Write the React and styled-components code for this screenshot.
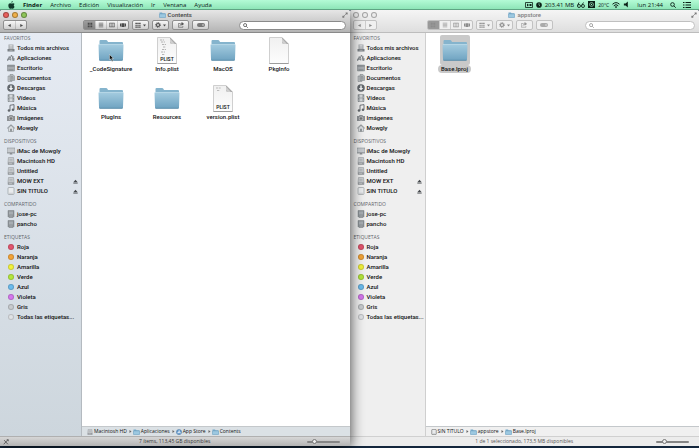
import { useState } from "react";
import styled, { createGlobalStyle, css } from "styled-components";

const GlobalStyle = createGlobalStyle`
  * {
    box-sizing: border-box;
  }
  body {
    margin: 0;
    background: #13263c;
    font-family: Roboto, "Noto Sans", sans-serif;
    font-size: 6px;
    font-weight: 500;
    color: #111;
  }
  button, input {
    font: inherit;
    color: inherit;
    margin: 0;
    padding: 0;
    border: none;
    background: none;
  }
  a {
    color: inherit;
    text-decoration: none;
  }
  svg {
    display: block;
    flex: none;
  }
`;

const Desktop = styled.div`
  display: flex;
  flex-direction: column;
  min-height: 100vh;
  padding-bottom: 2px;
`;

/* ---------- menu bar ---------- */

const MenuBar = styled.header`
  display: flex;
  align-items: center;
  justify-content: space-between;
  height: 10px;
  padding: 0 8px;
  background: linear-gradient(#b4fbd6, #8ee6b8);
  border-bottom: 1px solid #5fa583;
  color: #0c2017;
  font-family: "Open Sans", "Noto Sans", sans-serif;
  position: relative;
  z-index: 2;
`;

const Menus = styled.nav`
  display: flex;
  align-items: center;
  gap: 8px;
`;

const MenuButton = styled.button`
  line-height: 10px;
  font-weight: ${({ $app }) => ($app ? 700 : 500)};
`;

const StatusItems = styled.div`
  display: flex;
  align-items: center;
  gap: 3px;
  line-height: 10px;
`;

const Temperature = styled.span`
  font-size: 5px;
`;

const Clock = styled.span`
  padding: 0 4px;
`;

const NotificationButton = styled.button`
  padding-left: 4px;
`;

/* ---------- window ---------- */

const Windows = styled.main`
  flex: 1;
  display: grid;
  grid-template-columns: 1fr 1fr;
`;

const WindowFrame = styled.section`
  display: flex;
  flex-direction: column;
  border-radius: 2px 2px 0 0;
  overflow: hidden;
  background: #fff;
  ${({ $active }) =>
    $active &&
    css`
      position: relative;
      z-index: 1;
      box-shadow: 0 2px 14px rgba(0, 0, 0, 0.75);
    `}
`;

const Chrome = styled.header`
  height: 23px;
  background: ${({ $active }) =>
    $active
      ? "linear-gradient(#e6e6e6, #b4b4b4)"
      : "linear-gradient(#f5f5f5, #dedede)"};
  border-bottom: 1px solid ${({ $active }) => ($active ? "#8a8a8a" : "#bdbdbd")};
`;

const TitleRow = styled.div`
  display: grid;
  grid-template-columns: 1fr auto 1fr;
  align-items: center;
  height: 9px;
  padding: 0 2px 0 3px;
  color: ${({ $active }) => ($active ? "#444" : "#808080")};
`;

const Lights = styled.div`
  display: flex;
  gap: 3px;
`;

const Light = styled.button`
  width: 6px;
  height: 6px;
  border-radius: 50%;
  border: 1px solid rgba(0, 0, 0, 0.3);
  background: ${({ $color }) => $color};
`;

const Title = styled.h1`
  display: flex;
  align-items: center;
  gap: 2px;
  margin: 0;
  font-size: 6px;
  font-weight: 500;
  line-height: 9px;
`;

const FullScreenButton = styled.button`
  justify-self: end;
  color: #777;
`;

const ToolRow = styled.div`
  display: flex;
  align-items: center;
  height: 12px;
  padding-right: 4px;
  color: ${({ $active }) => ($active ? "#4a4a4a" : "#8c8c8c")};
`;

const NavSlot = styled.div`
  width: ${({ $sidebar }) => $sidebar}px;
  padding: 0 3px;
`;

const Tools = styled.div`
  flex: 1;
  display: flex;
  align-items: center;
  gap: 3px;
  padding-left: 1px;
`;

const Group = styled.div`
  display: inline-flex;
  height: 10px;
  border: 1px solid ${({ $active }) => ($active ? "#8f8f8f" : "#c2c2c2")};
  border-radius: 2px;
  overflow: hidden;
  background: ${({ $active }) =>
    $active ? "linear-gradient(#f7f7f7, #cfcfcf)" : "#f0f0f0"};
`;

const ToolButton = styled.button`
  display: flex;
  align-items: center;
  justify-content: center;
  gap: 2px;
  width: ${({ $wide }) => ($wide ? 15 : 11)}px;
  background: ${({ $pressed }) => ($pressed ? "rgba(0, 0, 0, 0.36)" : "none")};

  & + & {
    border-left: 1px solid rgba(0, 0, 0, 0.15);
  }
`;

const SearchBox = styled.label`
  display: flex;
  align-items: center;
  gap: 2px;
  width: ${({ $width }) => $width}px;
  height: 9px;
  padding: 0 3px;
  border: 1px solid ${({ $active }) => ($active ? "#8a8a8a" : "#c0c0c0")};
  border-radius: 5px;
  background: #fff;
`;

const SearchInput = styled.input`
  flex: 1;
  min-width: 0;
  height: 7px;
  outline: none;
`;

/* ---------- window body ---------- */

const Body = styled.div`
  flex: 1;
  display: flex;
`;

const Sidebar = styled.aside`
  flex: none;
  width: ${({ $width }) => $width}px;
  display: flex;
  flex-direction: column;
  gap: 4px;
  padding-top: 1px;
  border-right: 1px solid ${({ $active }) => ($active ? "#b4bac0" : "#cfcfcf")};
  background: ${({ $active }) =>
    $active ? "linear-gradient(#e6ebf3, #cdd6dd)" : "#efefef"};
`;

const SectionTitle = styled.h2`
  margin: 0;
  padding-left: 4px;
  font-family: "Open Sans", "Noto Sans", sans-serif;
  font-size: 5px;
  line-height: 9px;
  font-weight: 500;
  color: #5f656b;
`;

const List = styled.ul`
  list-style: none;
  margin: 0;
  padding: 0;
`;

const Item = styled.li`
  display: flex;
  align-items: center;
  justify-content: space-between;
  height: 10px;
  padding: 0 3px 0 7px;
`;

const ItemLink = styled.a`
  display: flex;
  align-items: center;
  gap: 2px;
  line-height: 10px;
  white-space: nowrap;
`;

const IconSlot = styled.span`
  display: flex;
  justify-content: center;
  width: 8px;
  color: #7b8085;
`;

const Tag = styled.span`
  width: 6px;
  height: 6px;
  border-radius: 50%;
  border: 1px solid rgba(0, 0, 0, 0.16);
  background: ${({ $color }) => $color};
`;

const Content = styled.div`
  flex: 1;
  display: flex;
  flex-direction: column;
  min-width: 0;
`;

const Files = styled.div`
  flex: 1;
  display: grid;
  grid-template-columns: repeat(auto-fill, 56px);
  grid-auto-rows: 48px;
  padding: 2px 1px;
`;

const FileButton = styled.button`
  display: flex;
  flex-direction: column;
  align-items: center;
`;

const FileIcon = styled.span`
  display: flex;
  align-items: center;
  justify-content: center;
  width: 30px;
  height: 30px;
  border-radius: 2px;
  background: ${({ $selected }) => ($selected ? "#c9c9c9" : "none")};
`;

const FileName = styled.span`
  padding: 0 3px;
  border-radius: 4px;
  line-height: 8px;
  background: ${({ $selected }) => ($selected ? "#c9c9c9" : "none")};
`;

const PathBar = styled.nav`
  display: flex;
  align-items: center;
  gap: 2px;
  height: 10px;
  padding: 0 5px;
  border-top: 1px solid #c4c8cb;
  background: ${({ $active }) => ($active ? "#dbe1e5" : "#f0f0f0")};
  font-family: "Open Sans", "Noto Sans", sans-serif;
  font-size: 5px;
`;

const Crumb = styled.a`
  display: flex;
  align-items: center;
  gap: 1px;
  line-height: 9px;
`;

const StatusBar = styled.footer`
  display: grid;
  grid-template-columns: 1fr auto 1fr;
  align-items: center;
  height: 10px;
  padding: 0 3px;
  border-top: 1px solid ${({ $active }) => ($active ? "#b0b0b0" : "#d0d0d0")};
  background: ${({ $active }) =>
    $active ? "linear-gradient(#d6d6d6, #b4b4b4)" : "#ececec"};
  font-family: "Open Sans", "Noto Sans", sans-serif;
  font-size: 5px;
  font-weight: 400;
  line-height: 9px;
  color: ${({ $active }) => ($active ? "#333" : "#555")};
`;

const ZoomSlider = styled.input`
  appearance: none;
  grid-column: 3;
  justify-self: end;
  width: 33px;
  height: 6px;
  margin-right: 7px;

  &::-webkit-slider-runnable-track {
    height: 2px;
    background: #858585;
    border-radius: 1px;
  }
  &::-webkit-slider-thumb {
    appearance: none;
    width: 5px;
    height: 5px;
    margin-top: -2px;
    border: 1px solid #777;
    border-radius: 50%;
    background: #eee;
  }
`;

const StatusText = styled.span`
  grid-column: 2;
`;

/* ---------- icons ---------- */

const Apple = () => (
  <svg width="7" height="8" viewBox="0 0 14 16" fill="#10382a">
    <path d="M9.6 0c.1 1.6-1.200 3.300-2.900 3.400C6.500 1.800 8 .2 9.600 0zM12.800 12c-.8 1.800-1.800 3.500-3.200 3.500-1 0-1.300-.6-2.500-.6s-1.600.6-2.500.6C2.600 15.500.7 11.800.7 8.900c0-2.900 1.800-4.500 3.600-4.500 1.200 0 2 .7 2.900.7.900 0 1.700-.8 3.200-.8 1 0 2.100.5 2.800 1.500-2.500 1.400-2.100 5 .6 6.200z" />
  </svg>
);

const SmallFolder = () => (
  <svg width="7" height="6" viewBox="0 0 14 12">
    <path d="M1 2.500V1h5l1 1.500h6V11H1z" fill="#75a9c9" />
    <path d="M1 4h12v7H1z" fill="#9cc8e0" stroke="#6a9dbd" strokeWidth=".8" />
  </svg>
);

const Folder = () => (
  <svg width="26" height="24" viewBox="0 0 26 24">
    <defs>
      <linearGradient id="folder" x1="0" y1="0" x2="0" y2="1">
        <stop offset="0" stopColor="#a3cbdf" />
        <stop offset="1" stopColor="#6fa3c1" />
      </linearGradient>
    </defs>
    <path
      d="M1.500 22V3q0-1 1-1H8q1 0 1.500 1l.5 1h14q1 0 1 1v17z"
      fill="#85b4cd"
    />
    <path d="M.5 6.500h25L25 21.500q0 1-1 1H2q-1 0-1-1z" fill="url(#folder)" />
    <path d="M1 6.500h24" stroke="#c3e0ed" strokeWidth=".7" />
    <path d="M1.500 22.300h23" stroke="#5688a5" strokeWidth=".8" />
  </svg>
);

const DocText = styled.text`
  font-size: 5px;
  font-weight: 600;
`;

const Doc = ({ plist, lines }) => (
  <svg width="20" height="27" viewBox="0 0 20 27">
    <defs>
      <linearGradient id="paper" x1="0" y1="0" x2="0" y2="1">
        <stop offset="0" stopColor="#f0f0f0" />
        <stop offset="1" stopColor="#fdfdfd" />
      </linearGradient>
    </defs>
    <path
      d="M.5.500H13L19.500 7v19.500H.5z"
      fill="url(#paper)"
      stroke="#c4c4c4"
      strokeWidth=".8"
    />
    <path d="M13 .5 19.500 7H15q-2 0-2-2z" fill="#a2a2a2" />
    <path d="M13 1.500 18 7h-3.500L13 5z" fill="#cfcfcf" />
    {lines && (
      <path
        d="M3 3h4M4 5h4M5 7.500h4M6 10h3M5 12.500h4M4 15h4M5 17.500h3"
        stroke="#b4b4b4"
        strokeWidth="1.200"
        strokeDasharray="2 .7"
      />
    )}
    {plist && !lines && (
      <path d="M3 3h5M4 5.500h3" stroke="#bcbcbc" strokeDasharray="2 .7" />
    )}
    {plist && (
      <DocText x="10" y="24" textAnchor="middle" fill="#222">
        PLIST
      </DocText>
    )}
    <path d="M.5 26.500h19" stroke="#8e8e8e" strokeWidth=".8" />
  </svg>
);

const Magnifier = ({ size = 6 }) => (
  <svg
    width={size}
    height={size}
    viewBox="0 0 12 12"
    fill="none"
    stroke="currentColor"
    strokeWidth="1.800"
  >
    <circle cx="5" cy="5" r="3.700" />
    <path d="m7.800 7.800 3.700 3.700" />
  </svg>
);

// every glyph lives on a 16x16 grid
const glyphs = {
  files: (
    <>
      <path d="M3 1h10v9H3z" fill="#a4a8ac" />
      <path d="M5 3h6M5 5.500h6M5 8h6" stroke="#fff" />
      <path d="M1 10h14v5H1z" fill="currentColor" />
      <path d="M5 12.500h6" stroke="#ddd" />
    </>
  ),
  apps: (
    <g fill="none" stroke="currentColor" strokeWidth="1.800">
      <path d="M1 14 4.500 5l3 8M6 9 9 2l5 12M0 10.500h7M9 10h7M12 4v10" />
    </g>
  ),
  desktop: (
    <>
      <path d="M1 2h14v12H1z" fill="#a9adb1" stroke="currentColor" />
      <path d="M1 4h14M3 12h10" stroke="currentColor" strokeWidth="2" />
    </>
  ),
  documents: (
    <>
      <path d="M2 4h8v11H2z" fill="#c3c6c9" stroke="currentColor" />
      <path d="M6 1h6l3 3v9H6z" fill="#b1b5b8" stroke="currentColor" />
      <path d="M8 5h4M8 7.500h5M8 10h5" stroke="currentColor" />
    </>
  ),
  downloads: (
    <>
      <circle cx="8" cy="8" r="7.500" fill="#62676c" />
      <path d="M8 13 3.500 8h3V3h3v5h3z" fill="#f2f4f6" />
    </>
  ),
  movies: (
    <>
      <path d="M2 1h12v14H2z" fill="#d4d7da" stroke="currentColor" />
      <path d="M4.500 1v14M11.500 1v14M4.500 8h7" stroke="currentColor" />
      <path
        d="M3 2v13M13 2v13"
        stroke="currentColor"
        strokeWidth="2"
        strokeDasharray="1.500 1.500"
      />
    </>
  ),
  music: (
    <>
      <path
        d="M6 13V2.500l8-1.300V11"
        fill="none"
        stroke="#62676c"
        strokeWidth="1.800"
      />
      <circle cx="4" cy="13" r="2.600" fill="#62676c" />
      <circle cx="12" cy="11.500" r="2.600" fill="#62676c" />
    </>
  ),
  pictures: (
    <>
      <path d="M0 4h4l1-2h6l1 2h4v10H0z" fill="#8d9195" />
      <circle cx="8" cy="9" r="3.500" fill="#777" stroke="#eee" />
    </>
  ),
  home: (
    <>
      <path d="M3 8v7h10V8L8 3z" fill="#dcdfe2" stroke="currentColor" />
      <path
        d="M.5 8.500 8 1.500l7.500 7"
        fill="none"
        stroke="currentColor"
        strokeWidth="1.800"
      />
      <path d="M6.500 9.500h3V15h-3z" fill="currentColor" />
    </>
  ),
  imac: (
    <>
      <path d="M0 2h16v10H0z" fill="#c6cace" stroke="currentColor" />
      <path d="M0 10.500h16v2H0z" fill="#9a9ea2" />
      <path d="M6 12h4l1 3H5z" fill="#8a8e92" />
    </>
  ),
  disk: (
    <>
      <path d="M3 1h10l1 9v5H2v-5z" fill="#c8cbce" stroke="#8d9195" />
      <path d="M2 10.500h12V15H2z" fill="#989ca0" />
      <path d="M4 12.800h6" stroke="#ddd" />
      <path d="M5 5h6M5 7.500h6" stroke="#a2a6aa" />
    </>
  ),
  external: (
    <>
      <rect
        x="2"
        y="1"
        width="12"
        height="14"
        rx="2"
        fill="#e9ebed"
        stroke="currentColor"
      />
      <path d="M4 12.500h8" stroke="#a9adb1" />
    </>
  ),
  pc: (
    <>
      <path d="M2 1h12v12l-2 2H4l-2-2z" fill="#8b9095" stroke="#7b8085" />
      <path d="M4 3h8v6H4z" fill="#a7adb2" />
      <path d="M5 12h6" stroke="#c4c8cc" />
    </>
  ),
  store: (
    <>
      <circle cx="8" cy="8" r="7" fill="#5f97cb" stroke="#456f9a" />
      <path
        d="m5 12 3.500-8 3 8M4 9.500h8"
        fill="none"
        stroke="#fff"
        strokeWidth="1.500"
      />
    </>
  ),
  eject: <path d="M8 2 15 10H1zM1 12h14v2.500H1z" fill="#44484c" />,
  grid: (
    <path d="M2 2h5v5H2zM9 2h5v5H9zM2 9h5v5H2zM9 9h5v5H9z" fill="currentColor" />
  ),
  list: (
    <path
      d="M2 3h12M2 6.300h12M2 9.600h12M2 13h12"
      stroke="currentColor"
      strokeWidth="1.500"
    />
  ),
  columns: (
    <path
      d="M1 3h14v10H1zM5.700 3v10M10.300 3v10"
      fill="none"
      stroke="currentColor"
      strokeWidth="1.600"
    />
  ),
  coverflow: <path d="M0 4h3v8H0zM4 3h8v10H4zM13 4h3v8h-3z" fill="currentColor" />,
  arrange: (
    <path
      d="M1 2h4v3H1zM6 2h4v3H6zM11 2h4v3h-4zM1 7h4v3H1zM6 7h4v3H6zM11 7h4v3h-4zM1 12h4v3H1zM6 12h4v3H6zM11 12h4v3h-4z"
      fill="currentColor"
    />
  ),
  gear: (
    <g fill="none" stroke="currentColor">
      <circle cx="8" cy="8" r="4" strokeWidth="3" />
      <circle cx="8" cy="8" r="6.500" strokeWidth="2.500" strokeDasharray="2.600 2.500" />
    </g>
  ),
  share: (
    <g fill="none" stroke="currentColor" strokeWidth="1.500">
      <path d="M7 4H1v10h12v-3" />
      <path d="M5 11q0-6 6-6" />
      <path d="M10 1.500 15 5l-5 3.500z" fill="currentColor" />
    </g>
  ),
  tag: (
    <>
      <rect
        x="0"
        y="4"
        width="16"
        height="8"
        rx="4"
        fill="currentColor"
        fillOpacity=".7"
      />
      <circle cx="12" cy="8" r="1.500" fill="#eee" />
    </>
  ),
  back: <path d="M12 3v10L3 8z" fill="currentColor" />,
  forward: <path d="M4 3v10l9-5z" fill="currentColor" />,
  full: (
    <path
      d="M9 1h6v6l-2-2-3 3-2-2 3-3zM7 15H1V9l2 2 3-3 2 2-3 3z"
      fill="currentColor"
    />
  ),
  tools: (
    <path d="m2 14 11-12M3 3l10 11M10 2h4v4" stroke="#444" strokeWidth="2" fill="none" />
  ),
  record: (
    <>
      <path
        d="M1 3h14v10H1z"
        fill="none"
        stroke="currentColor"
        strokeWidth="1.600"
      />
      <path d="m4 5 4 3-4 3zM9 6h4v4H9z" fill="currentColor" />
    </>
  ),
  disc: (
    <>
      <circle cx="8" cy="8" r="7.500" fill="currentColor" />
      <path d="M8 8V3M8 8l3 3" stroke="#a6f2ca" strokeWidth="1.600" />
    </>
  ),
  glasses: (
    <g fill="none" stroke="currentColor" strokeWidth="1.700">
      <circle cx="4" cy="10" r="3" />
      <circle cx="12" cy="10" r="3" />
      <path d="M1 9 4 3M9 9l4-6" />
    </g>
  ),
  chip: (
    <>
      <path d="M0 0h16v16H0z" fill="currentColor" />
      <circle cx="8" cy="8" r="4.500" fill="none" stroke="#a6f2ca" strokeWidth="1.500" />
      <circle cx="8" cy="8" r="1.500" fill="#a6f2ca" />
    </>
  ),
  wifi: (
    <g fill="none" stroke="currentColor" strokeWidth="2">
      <path d="M1 6.500q7-6.500 14 0M3.500 9.500q4.500-4.500 9 0" />
      <path d="M5.500 11.500Q8 9.500 10.500 11.500L8 14.500z" fill="currentColor" stroke="none" />
    </g>
  ),
  volume: <path d="M2 5.500h4L11 1v14L6 10.500H2z" fill="currentColor" />,
  menu: (
    <path
      d="M0 3h3M5 3h11M0 8h3M5 8h11M0 13h3M5 13h11"
      stroke="currentColor"
      strokeWidth="2.400"
    />
  ),
};

const Glyph = ({ name, size = 8 }) => (
  <svg width={size} height={size} viewBox="0 0 16 16">
    {glyphs[name]}
  </svg>
);

const Caret = () => (
  <svg width="3" height="3" viewBox="0 0 6 6" fill="currentColor">
    <path d="M0 1h6L3 5z" />
  </svg>
);

const CrumbArrow = () => (
  <svg width="3" height="3" viewBox="0 0 6 6" fill="#666">
    <path d="M1 0v6l4-3z" />
  </svg>
);

// the mouse pointer lies over the hovered folder
const HoveredIcon = styled.span`
  position: relative;
`;

const Pointer = styled.svg`
  position: absolute;
  left: 11px;
  top: 16px;
`;

/* ---------- data ---------- */

const sections = [
  {
    title: "FAVORITOS",
    items: [
      { name: "Todos mis archivos", icon: "files" },
      { name: "Aplicaciones", icon: "apps" },
      { name: "Escritorio", icon: "desktop" },
      { name: "Documentos", icon: "documents" },
      { name: "Descargas", icon: "downloads" },
      { name: "Vídeos", icon: "movies" },
      { name: "Música", icon: "music" },
      { name: "Imágenes", icon: "pictures" },
      { name: "Mowgly", icon: "home" },
    ],
  },
  {
    title: "DISPOSITIVOS",
    items: [
      { name: "iMac de Mowgly", icon: "imac" },
      { name: "Macintosh HD", icon: "disk" },
      { name: "Untitled", icon: "disk" },
      { name: "MOW EXT", icon: "disk", eject: true },
      { name: "SIN TITULO", icon: "external", eject: true },
    ],
  },
  {
    title: "COMPARTIDO",
    items: [
      { name: "jose-pc", icon: "pc" },
      { name: "pancho", icon: "pc" },
    ],
  },
  {
    title: "ETIQUETAS",
    items: [
      { name: "Roja", color: "#e4566e" },
      { name: "Naranja", color: "#f3a437" },
      { name: "Amarilla", color: "#f2f23c" },
      { name: "Verde", color: "#b4e63c" },
      { name: "Azul", color: "#6cbcee" },
      { name: "Violeta", color: "#d578ee" },
      { name: "Gris", color: "#c8cbce" },
      { name: "Todas las etiquetas...", color: "#dfe2e5" },
    ],
  },
];

const windows = [
  {
    title: "Contents",
    active: true,
    sidebar: 82,
    search: 107,
    files: [
      { name: "_CodeSignature", kind: "folder", hovered: true },
      { name: "Info.plist", kind: "plist", lines: true },
      { name: "MacOS", kind: "folder" },
      { name: "PkgInfo", kind: "doc" },
      { name: "PlugIns", kind: "folder" },
      { name: "Resources", kind: "folder" },
      { name: "version.plist", kind: "plist" },
    ],
    path: [
      { name: "Macintosh HD", icon: "disk" },
      { name: "Aplicaciones" },
      { name: "App Store", icon: "store" },
      { name: "Contents" },
    ],
    status: "7 ítems, 113,45 GB disponibles",
  },
  {
    title: "appstore",
    active: false,
    sidebar: 76,
    search: 110,
    files: [{ name: "Base.lproj", kind: "folder", selected: true }],
    path: [
      { name: "SIN TITULO", icon: "external" },
      { name: "appstore" },
      { name: "Base.lproj" },
    ],
    status: "1 de 1 seleccionado, 173,5 MB disponibles",
  },
];

const views = [
  { icon: "grid", label: "Iconos" },
  { icon: "list", label: "Lista" },
  { icon: "columns", label: "Columnas" },
  { icon: "coverflow", label: "Cover Flow" },
];

const lightColors = ["#e8605c", "#f0b04a", "#8fc65a"];

const File = ({ file }) => (
  <FileButton type="button">
    <FileIcon $selected={file.selected}>
      {file.kind === "folder" ? (
        <HoveredIcon>
          <Folder />
          {file.hovered && (
            <Pointer width="5" height="8" viewBox="0 0 10 16">
              <path
                d="M1 1v11l2.500-2.500L6 15l2-1-2.500-5H9z"
                fill="#111"
                stroke="#fff"
                strokeWidth=".8"
              />
            </Pointer>
          )}
        </HoveredIcon>
      ) : (
        <Doc plist={file.kind === "plist"} lines={file.lines} />
      )}
    </FileIcon>
    <FileName $selected={file.selected}>{file.name}</FileName>
  </FileButton>
);

const FinderWindow = ({ data }) => {
  const { title, active, sidebar, search, files, path, status } = data;
  const [query, setQuery] = useState("");
  const [view, setView] = useState("grid");
  const [zoom, setZoom] = useState(20);

  return (
    <WindowFrame $active={active}>
      <Chrome $active={active}>
        <TitleRow $active={active}>
          <Lights>
            {lightColors.map((color) => (
              <Light key={color} type="button" $color={active ? color : "#ececec"} />
            ))}
          </Lights>
          <Title>
            <SmallFolder />
            {title}
          </Title>
          <FullScreenButton type="button" aria-label="Pantalla completa">
            <Glyph name="full" size={6} />
          </FullScreenButton>
        </TitleRow>
        <ToolRow $active={active}>
          <NavSlot $sidebar={sidebar}>
            <Group $active={active}>
              <ToolButton type="button" aria-label="Atrás">
                <Glyph name="back" size={5} />
              </ToolButton>
              <ToolButton type="button" aria-label="Adelante">
                <Glyph name="forward" size={5} />
              </ToolButton>
            </Group>
          </NavSlot>
          <Tools>
            <Group $active={active}>
              {views.map(({ icon, label }) => (
                <ToolButton
                  key={icon}
                  type="button"
                  aria-label={label}
                  $pressed={view === icon}
                  onClick={() => setView(icon)}
                >
                  <Glyph name={icon} size={6} />
                </ToolButton>
              ))}
            </Group>
            <Group $active={active}>
              <ToolButton type="button" aria-label="Ordenar" $wide>
                <Glyph name="arrange" size={6} />
                <Caret />
              </ToolButton>
            </Group>
            <Group $active={active}>
              <ToolButton type="button" aria-label="Acciones" $wide>
                <Glyph name="gear" size={6} />
                <Caret />
              </ToolButton>
            </Group>
            <Group $active={active}>
              <ToolButton type="button" aria-label="Compartir" $wide>
                <Glyph name="share" size={6} />
              </ToolButton>
            </Group>
            <Group $active={active}>
              <ToolButton type="button" aria-label="Etiquetas" $wide>
                <Glyph name="tag" />
              </ToolButton>
            </Group>
          </Tools>
          <SearchBox $active={active} $width={search}>
            <Magnifier size={5} />
            <SearchInput
              aria-label="Buscar"
              value={query}
              onChange={(e) => setQuery(e.target.value)}
            />
          </SearchBox>
        </ToolRow>
      </Chrome>
      <Body>
        <Sidebar $active={active} $width={sidebar}>
          {sections.map((section) => (
            <div key={section.title}>
              <SectionTitle>{section.title}</SectionTitle>
              <List>
                {section.items.map((item) => (
                  <Item key={item.name}>
                    <ItemLink href="#">
                      <IconSlot>
                        {item.icon ? (
                          <Glyph name={item.icon} />
                        ) : (
                          <Tag $color={item.color} />
                        )}
                      </IconSlot>
                      {item.name}
                    </ItemLink>
                    {item.eject && (
                      <button type="button" aria-label="Expulsar">
                        <Glyph name="eject" size={5} />
                      </button>
                    )}
                  </Item>
                ))}
              </List>
            </div>
          ))}
        </Sidebar>
        <Content>
          <Files>
            {files.map((file) => (
              <File key={file.name} file={file} />
            ))}
          </Files>
          <PathBar $active={active}>
            {path.map((crumb, i) => (
              <Crumb key={crumb.name} href="#">
                {i > 0 && <CrumbArrow />}
                {crumb.icon ? <Glyph name={crumb.icon} size={6} /> : <SmallFolder />}
                {crumb.name}
              </Crumb>
            ))}
          </PathBar>
        </Content>
      </Body>
      <StatusBar $active={active}>
        {active && <Glyph name="tools" size={6} />}
        <StatusText>{status}</StatusText>
        <ZoomSlider
          type="range"
          aria-label="Tamaño de los iconos"
          value={zoom}
          onChange={(e) => setZoom(Number(e.target.value))}
        />
      </StatusBar>
    </WindowFrame>
  );
};

const menus = ["Archivo", "Edición", "Visualización", "Ir", "Ventana", "Ayuda"];

const App = () => {
  return (
    <Desktop>
      <GlobalStyle />
      <MenuBar>
        <Menus>
          <Apple />
          <MenuButton type="button" $app>
            Finder
          </MenuButton>
          {menus.map((menu) => (
            <MenuButton key={menu} type="button">
              {menu}
            </MenuButton>
          ))}
        </Menus>
        <StatusItems>
          <Glyph name="record" />
          <Glyph name="disc" size={6} />
          <span>203.41 MB</span>
          <Glyph name="glasses" />
          <Glyph name="chip" size={7} />
          <Temperature>20°C</Temperature>
          <Glyph name="wifi" />
          <Glyph name="volume" size={7} />
          <Clock>lun 21:44</Clock>
          <Magnifier />
          <NotificationButton type="button" aria-label="Centro de notificaciones">
            <Glyph name="menu" />
          </NotificationButton>
        </StatusItems>
      </MenuBar>
      <Windows>
        {windows.map((data) => (
          <FinderWindow key={data.title} data={data} />
        ))}
      </Windows>
    </Desktop>
  );
};

export default App;
